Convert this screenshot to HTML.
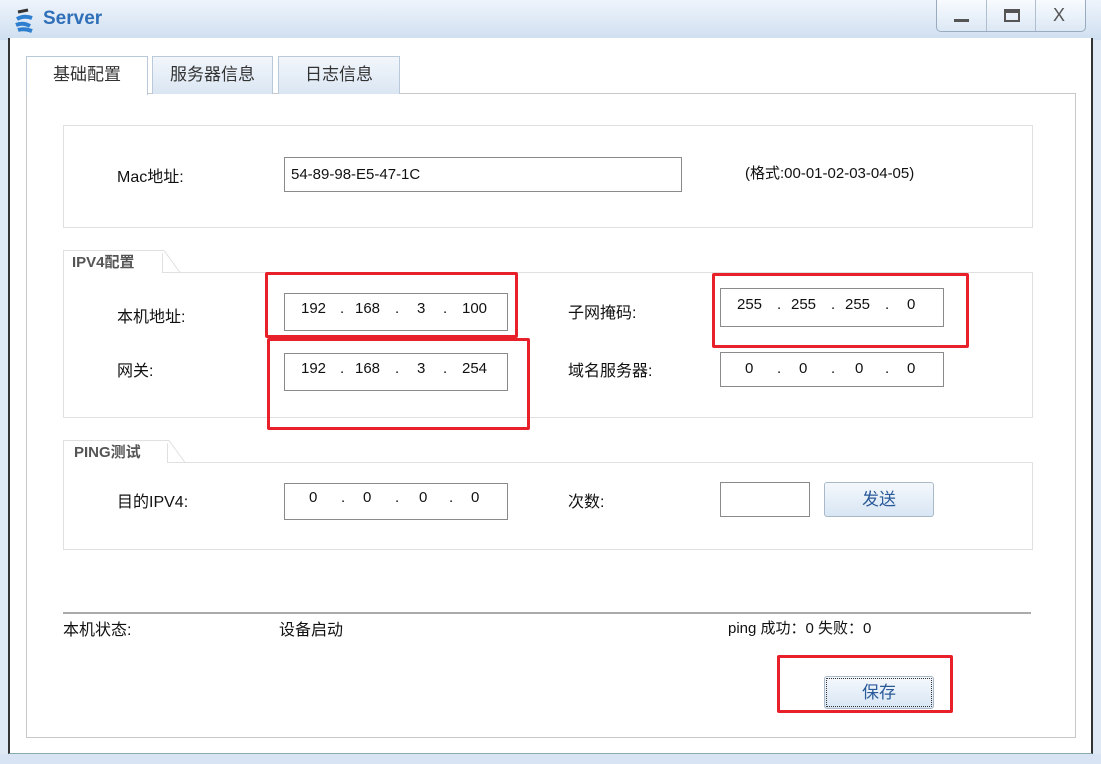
<!DOCTYPE html>
<html><head><meta charset="utf-8"><style>
*{margin:0;padding:0;box-sizing:border-box}
body{width:1101px;height:764px;overflow:hidden;background:#dfe9f6;font-family:"Liberation Sans","Noto Sans CJK SC",sans-serif;font-size:16px;color:#111;position:relative}
.a{position:absolute}
.title{left:0;top:0;width:1101px;height:40px;background:linear-gradient(#eef4fb,#cfdff0)}
.client{left:8px;top:38px;width:1085px;height:716px;background:#fff;border-left:2px solid #333;border-right:2px solid #333;border-bottom:1px solid #8aa}
.frame{left:0;top:754px;width:1101px;height:10px;background:#d8e4f3}
.tab{top:56px;height:38px;border:1px solid #b9c9d9;border-bottom:none;text-align:center;line-height:36px;font-size:17px;color:#333;background:linear-gradient(#f2f6fb,#dae6f3)}
.panel{left:26px;top:93px;width:1050px;height:645px;border:1px solid #c8c8c8;background:#fff}
.grp{border:1px solid #e0e0e0;background:#fff}
.inp{border:1px solid #8a8a8a;background:#fff;font-size:15px;line-height:34px}
.lbl{font-size:16px}
.red{border:3px solid #e8202a;border-radius:2px}
.btn{border:1px solid #aab8c8;border-radius:3px;background:linear-gradient(#f4f8fc,#d8e6f4);color:#2a5a9a;text-align:center;font-size:17px}
.gl{font-size:15px;font-weight:bold;color:#555;background:#fff;border:1px solid #e0e0e0;border-bottom:none;padding:0 0 0 8px}
</style></head><body>
<div class="a title"></div>
<svg class="a" style="left:14px;top:8px" width="24" height="26" viewBox="0 0 24 26"><path d="M4 4 L14 2" stroke="#333" stroke-width="3"/><path d="M3 11 Q10 7 18 10 M2 17 Q9 14 16 18 M4 22 Q10 20 18 23" stroke="#2f7fd0" stroke-width="4" fill="none"/></svg>
<div class="a" style="left:43px;top:8px;font-size:19px;font-weight:bold;color:#2f6fb8">Server</div>
<div class="a" style="left:936px;top:0;width:150px;height:32px;border:1px solid #9aabbd;border-top:none;border-radius:0 0 5px 5px;background:linear-gradient(#f8fbfe,#dce8f5)"></div>
<div class="a" style="left:986px;top:0;width:1px;height:31px;background:#b0bfd0"></div>
<div class="a" style="left:1035px;top:0;width:1px;height:31px;background:#b0bfd0"></div>
<div class="a" style="left:954px;top:19px;width:15px;height:3px;background:#555"></div>
<div class="a" style="left:1004px;top:9px;width:16px;height:13px;border:2px solid #555;border-top-width:4px"></div>
<div class="a" style="left:1053px;top:5px;font-size:18px;color:#555">X</div>
<div class="a client"></div>
<div class="a frame"></div>
<div class="a panel"></div>
<div class="a tab" style="left:26px;width:122px;background:#fff;height:39px">基础配置</div>
<div class="a tab" style="left:152px;width:121px">服务器信息</div>
<div class="a tab" style="left:278px;width:122px">日志信息</div>

<div class="a grp" style="left:63px;top:125px;width:970px;height:103px"></div>
<div class="a lbl" style="left:117px;top:163px">Mac地址:</div>
<div class="a inp" style="left:284px;top:157px;width:398px;height:35px;padding-left:6px">54-89-98-E5-47-1C</div>
<div class="a" style="left:745px;top:162px;font-size:15px">(格式:00-01-02-03-04-05)</div>

<div class="a grp" style="left:63px;top:272px;width:970px;height:146px"></div>
<div class="a gl" style="left:63px;top:250px;width:100px;height:23px;line-height:24px">IPV4配置</div>
<svg class="a" style="left:160px;top:250px" width="22" height="23"><path d="M0 0.5 L4 0.5 L20 22.5" stroke="#e0e0e0" fill="#fff"/></svg>
<div class="a lbl" style="left:117px;top:303px">本机地址:</div>
<div class="a inp" style="left:284px;top:293px;width:224px;height:38px;line-height:30px"><span class="a" style="left:16px">192</span><span class="a" style="left:55px">.</span><span class="a" style="left:70px">168</span><span class="a" style="left:110px">.</span><span class="a" style="left:132px">3</span><span class="a" style="left:158px">.</span><span class="a" style="left:177px">100</span></div>
<div class="a lbl" style="left:117px;top:357px">网关:</div>
<div class="a inp" style="left:284px;top:353px;width:224px;height:38px;line-height:30px"><span class="a" style="left:16px">192</span><span class="a" style="left:55px">.</span><span class="a" style="left:70px">168</span><span class="a" style="left:110px">.</span><span class="a" style="left:132px">3</span><span class="a" style="left:158px">.</span><span class="a" style="left:177px">254</span></div>
<div class="a lbl" style="left:568px;top:299px">子网掩码:</div>
<div class="a inp" style="left:720px;top:288px;width:224px;height:39px;line-height:32px"><span class="a" style="left:16px">255</span><span class="a" style="left:56px">.</span><span class="a" style="left:70px">255</span><span class="a" style="left:110px">.</span><span class="a" style="left:124px">255</span><span class="a" style="left:164px">.</span><span class="a" style="left:186px">0</span></div>
<div class="a lbl" style="left:568px;top:357px">域名服务器:</div>
<div class="a inp" style="left:720px;top:352px;width:224px;height:35px;line-height:32px"><span class="a" style="left:24px">0</span><span class="a" style="left:56px">.</span><span class="a" style="left:78px">0</span><span class="a" style="left:110px">.</span><span class="a" style="left:134px">0</span><span class="a" style="left:164px">.</span><span class="a" style="left:186px">0</span></div>

<div class="a grp" style="left:63px;top:462px;width:970px;height:88px"></div>
<div class="a gl" style="left:63px;top:440px;width:105px;height:23px;line-height:24px;padding-left:10px">PING测试</div>
<svg class="a" style="left:165px;top:440px" width="22" height="23"><path d="M0 0.5 L4 0.5 L20 22.5" stroke="#e0e0e0" fill="#fff"/></svg>
<div class="a lbl" style="left:117px;top:488px">目的IPV4:</div>
<div class="a inp" style="left:284px;top:483px;width:224px;height:37px;line-height:28px"><span class="a" style="left:24px">0</span><span class="a" style="left:56px">.</span><span class="a" style="left:78px">0</span><span class="a" style="left:110px">.</span><span class="a" style="left:134px">0</span><span class="a" style="left:164px">.</span><span class="a" style="left:186px">0</span></div>
<div class="a lbl" style="left:568px;top:488px">次数:</div>
<div class="a inp" style="left:720px;top:482px;width:90px;height:35px"></div>
<div class="a btn" style="left:824px;top:482px;width:110px;height:35px;line-height:33px">发送</div>

<div class="a" style="left:63px;top:612px;width:968px;height:2px;background:#aaa"></div>
<div class="a lbl" style="left:63px;top:616px">本机状态:</div>
<div class="a lbl" style="left:279px;top:616px">设备启动</div>
<div class="a" style="left:728px;top:617px;font-size:15px">ping 成功：0 失败：0</div>
<div class="a btn" style="left:824px;top:676px;width:110px;height:33px;line-height:31px;outline:1px dotted #333;outline-offset:-3px">保存</div>

<div class="a red" style="left:265px;top:272px;width:253px;height:66px"></div>
<div class="a red" style="left:267px;top:338px;width:263px;height:92px"></div>
<div class="a red" style="left:712px;top:273px;width:257px;height:75px"></div>
<div class="a red" style="left:777px;top:655px;width:176px;height:58px"></div>
</body></html>
